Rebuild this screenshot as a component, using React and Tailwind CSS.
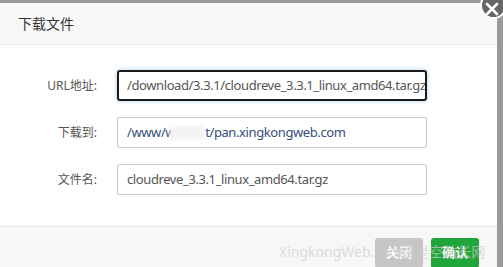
import React from "react";

const font = { fontFamily: '"Noto Sans", "Noto Sans CJK SC", sans-serif' };

const Field = ({ label, children }) => (
    <div className="flex items-center">
        <label className="w-[97px] shrink-0 text-right text-[12px] text-[#555]">{label}</label>
        <div className="ml-[20px]">{children}</div>
    </div>
);

export default function App() {
    return (
        <div className="relative h-[267px] w-[503px] overflow-hidden bg-[#9a9a9a]" style={font}>
            <div className="mt-[3px] flex h-[264px] w-[497px] flex-col bg-white">
                <div className="flex h-[42px] shrink-0 items-center border-b border-[#ececec] bg-[#f8f8f8] pl-[18px] text-[14px] text-[#333]">
                    下载文件
                </div>

                <div className="flex h-[181px] shrink-0 flex-col gap-[16px] pt-[25px]">
                    <Field label="URL地址:">
                        <div className="h-[31px] w-[310px] overflow-hidden whitespace-nowrap rounded-[3px] border-2 border-[#1a1a1a] pl-[8px] text-[13px] tracking-[-0.4px] leading-[27px] text-[#555] shadow-[0_0_4px_rgba(102,175,233,0.6)]">
                            /download/3.3.1/cloudreve_3.3.1_linux_amd64.tar.gz
                        </div>
                    </Field>
                    <Field label="下载到:">
                        <div className="relative h-[31px] w-[310px] overflow-hidden whitespace-nowrap rounded-[2px] border border-[#ccc] pl-[9px] text-[13px] tracking-[-0.4px] leading-[29px] text-[#35507a]">
                            /www/w<span className="inline-block w-[30px]"></span>t/pan.xingkongweb.com
                            {/* blurred part of the path */}
                            <div className="absolute left-[52px] top-[8px] h-[14px] w-[34px] bg-[#f4f4f4] blur-[1.5px]"></div>
                        </div>
                    </Field>
                    <Field label="文件名:">
                        <div className="h-[31px] w-[310px] overflow-hidden whitespace-nowrap rounded-[2px] border border-[#ccc] pl-[9px] text-[13px] tracking-[-0.4px] leading-[29px] text-[#555]">
                            cloudreve_3.3.1_linux_amd64.tar.gz
                        </div>
                    </Field>
                </div>

                <div className="flex flex-1 items-start justify-end gap-[8px] border-t border-[#e6e6e6] bg-[#f6f7f7] pr-[18px] pt-[11px]">
                    <button className="h-[30px] w-[48px] rounded-[3px] bg-[#c6c6c6] text-[13px] font-bold text-white">关闭</button>
                    <button className="h-[30px] w-[48px] rounded-[3px] bg-[#20a53a] text-[13px] font-bold text-white">确认</button>
                </div>
            </div>

            <div className="pointer-events-none absolute left-[279px] top-[241px] whitespace-nowrap text-[14px] text-[rgba(205,205,205,0.7)]">
                XingkongWeb.com@星空站长网
            </div>

            <div className="absolute left-[480px] top-[-8px] flex h-[27px] w-[27px] items-center justify-center rounded-full border-2 border-white bg-[#666]">
                <svg width="14" height="14" viewBox="0 0 14 14" className="mt-[6px] mr-[4px]">
                    <path d="M2 2 L12 12 M12 2 L2 12" stroke="white" strokeWidth="2.6" strokeLinecap="round" />
                </svg>
            </div>
        </div>
    );
}
